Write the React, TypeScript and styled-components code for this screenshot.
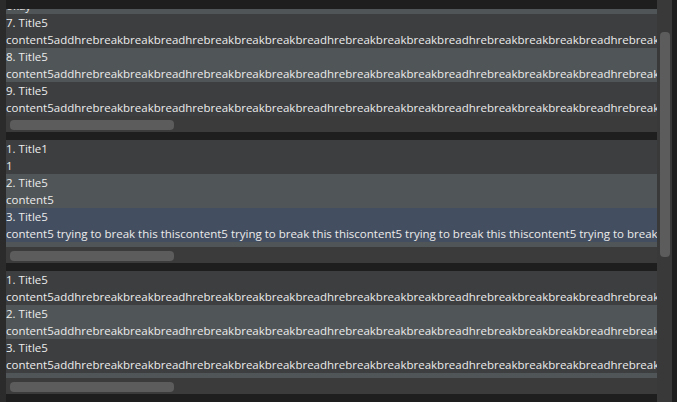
import React from 'react';
import styled, { createGlobalStyle } from 'styled-components';

type Tone = 'dark' | 'light' | 'selected';

interface Item {
  title: string;
  content: string;
  tone: Tone;
}

const GlobalStyle = createGlobalStyle`
  html, body {
    margin: 0;
    padding: 0;
    background: #2b2b2b;
    overflow: hidden;
  }
  body {
    font-family: "Open Sans", "Noto Sans", "Liberation Sans", sans-serif;
  }
`;

const rowColors: Record<Tone, string> = {
  dark: '#3c3e40',
  light: '#505557',
  selected: '#434e60',
};

const Window = styled.div`
  display: flex;
  width: 677px;
  height: 402px;
  overflow: hidden;
  background: #2b2b2b;
`;

const Content = styled.div`
  flex: 1;
  min-width: 0;
  padding-left: 6px;
  display: flex;
`;

const Stack = styled.div`
  flex: 1;
  min-width: 0;
  display: flex;
  flex-direction: column;
  gap: 8px;
  padding: 9px 0 8px;
  background: #1e1e1e;
`;

const Panel = styled.section`
  display: flex;
  flex-direction: column;
  background: #3b3b3b;
`;

const ListViewport = styled.div<{ $atEnd?: boolean }>`
  height: 107px;
  overflow: hidden;
  display: flex;
  flex-direction: column;
  justify-content: ${(p) => (p.$atEnd ? 'flex-end' : 'flex-start')};
`;

const Row = styled.div<{ $tone: Tone }>`
  flex-shrink: 0;
  height: 34px;
  background: ${(p) => rowColors[p.$tone]};
  color: #ececec;
  font-size: 11.5px;
  line-height: 17px;
  white-space: nowrap;
  overflow: hidden;
`;

const Line = styled.div`
  height: 17px;
`;

const HBar = styled.div`
  height: 16px;
  box-sizing: border-box;
  padding: 4px 0 2px 4px;
  background: #3b3b3b;
`;

const HThumb = styled.div`
  width: 164px;
  height: 10px;
  border-radius: 4px;
  background: #5c5c5c;
`;

const VTrack = styled.div`
  width: 15px;
  box-sizing: border-box;
  padding: 32px 0 0 3px;
  background: #393939;
`;

const VThumb = styled.div`
  width: 10px;
  height: 225px;
  border-radius: 4px;
  background: #5c5c5c;
`;

const Edge = styled.div`
  width: 5px;
  background: #1e1e1e;
`;

const longText =
  'content5addhrebreakbreakbreadhrebreakbreakbreakbreadhrebreakbreakbreakbreadhrebreakbreakbreakbreadhrebreakbreakbreakbreadhrebreakbreakbreakbreadhrebreakbreakbreakbreadhrebreakbreakbreakbreadhrebreak';
const tryText =
  'content5 trying to break this thiscontent5 trying to break this thiscontent5 trying to break this thiscontent5 trying to break this this';

const tone = (n: number): Tone => (n % 2 === 0 ? 'light' : 'dark');

const firstList: Item[] = [
  { title: '6. Title5', content: 'okay', tone: tone(6) },
  ...[7, 8, 9].map((n) => ({ title: `${n}. Title5`, content: longText, tone: tone(n) })),
];

const secondList: Item[] = [
  { title: '1. Title1', content: '1', tone: 'dark' },
  { title: '2. Title5', content: 'content5', tone: 'light' },
  { title: '3. Title5', content: tryText, tone: 'selected' },
  { title: '4. Title5', content: 'content5', tone: 'light' },
];

const thirdList: Item[] = [1, 2, 3, 4].map((n) => ({
  title: `${n}. Title5`,
  content: longText,
  tone: tone(n),
}));

const ListPanel: React.FC<{ items: Item[]; atEnd?: boolean }> = ({ items, atEnd }) => (
  <Panel>
    <ListViewport $atEnd={atEnd}>
      {items.map((item) => (
        <Row key={item.title} $tone={item.tone}>
          <Line>{item.title}</Line>
          <Line>{item.content}</Line>
        </Row>
      ))}
    </ListViewport>
    <HBar>
      <HThumb />
    </HBar>
  </Panel>
);

const App: React.FC = () => {
  return (
    <Window>
      <GlobalStyle />
      <Content>
        <Stack>
          <ListPanel items={firstList} atEnd />
          <ListPanel items={secondList} />
          <ListPanel items={thirdList} />
        </Stack>
      </Content>
      <VTrack>
        <VThumb />
      </VTrack>
      <Edge />
    </Window>
  );
};

export default App;
